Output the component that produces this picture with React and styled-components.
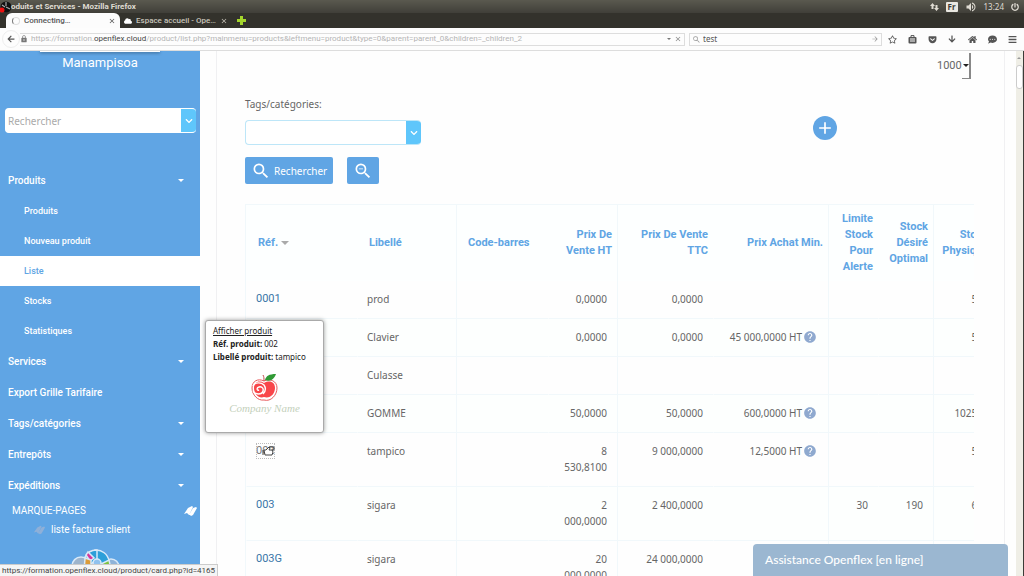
import React from 'react';
import styled, { createGlobalStyle } from 'styled-components';
import {
  MdSearch,
  MdZoomOut,
  MdAdd,
  MdHelp,
  MdLock,
  MdClose,
  MdArrowForward,
  MdVolumeUp,
} from 'react-icons/md';
import {
  FaGetPocket,
  FaCommentDots,
  FaCloud,
  FaArrowLeft,
  FaArrowDown,
  FaHome,
  FaRegStar,
  FaChevronDown,
  FaBars,
  FaPowerOff,
} from 'react-icons/fa';

const productLinks = ['Produits', 'Nouveau produit', 'Liste', 'Stocks', 'Statistiques'];

const sections = [
  { name: 'Services', caret: true },
  { name: 'Export Grille Tarifaire', caret: false },
  { name: 'Tags/catégories', caret: true },
  { name: 'Entrepôts', caret: true },
  { name: 'Expéditions', caret: true },
];

const columns = [
  { title: 'Réf.', width: 111, align: 'left', sorted: true },
  { title: 'Libellé', width: 99, align: 'left' },
  { title: 'Code-barres', width: 92, align: 'left', line: true },
  { title: 'Prix De Vente HT', width: 69, align: 'right' },
  { title: 'Prix De Vente TTC', width: 96, align: 'right', line: true },
  { title: 'Prix Achat Min.', width: 115, align: 'right' },
  { title: 'Limite Stock Pour Alerte', width: 50, align: 'right', line: true },
  { title: 'Stock Désiré Optimal', width: 55, align: 'right' },
  { title: 'Stock Physique', width: 60, align: 'right', line: true },
];

const products = [
  { id: '0001', label: 'prod', ht: '0,0000', ttc: '0,0000', physical: '50' },
  { id: '0002', label: 'Clavier', ht: '0,0000', ttc: '0,0000', buy: '45 000,0000 HT', physical: '50' },
  { id: '0003', label: 'Culasse' },
  { id: '001', label: 'GOMME', ht: '50,0000', ttc: '50,0000', buy: '600,0000 HT', physical: '10250' },
  { id: '002', label: 'tampico', ht: '8 530,8100', ttc: '9 000,0000', buy: '12,5000 HT', physical: '50', hovered: true },
  { id: '003', label: 'sigara', ht: '2 000,0000', ttc: '2 400,0000', limit: '30', wanted: '190', physical: '60' },
  { id: '003G', label: 'sigara', ht: '20 000,0000', ttc: '24 000,0000' },
];

const SignalArrows = () => (
  <svg width="9" height="8" viewBox="0 0 9 8" fill="currentColor">
    <path d="M2.5 0 5 3H3.5v3h-2V3H0zM6.5 8 4 5h1.5V2h2v3H9z" />
  </svg>
);

const Caret = ({ size = 6, color = 'currentColor' }) => (
  <svg width={size} height={size / 2} viewBox="0 0 6 3" fill={color}>
    <path d="M0 0h6L3 3z" />
  </svg>
);

const Bookmark = ({ color = '#fff', size = 14 }) => (
  <svg width={size} height={size} viewBox="0 0 14 14" fill={color}>
    <path d="M1 10 5 4l4-2 1 1-4 8-2-2zM6 11l4-7 3-1 1 1-4 7-2 1-1-1z" />
  </svg>
);

const RecordDot = () => (
  <svg width="11" height="12" viewBox="0 0 11 12">
    <circle cx="6" cy="6" r="5.5" fill="#111" />
    <path d="M6 5V1M6 6l4 2M5 6 2 4" stroke="#aaa" strokeWidth="1.2" />
    <circle cx="2" cy="9" r="2.5" fill="#e11" />
  </svg>
);

const Clipboard = () => (
  <svg width="9" height="9" viewBox="0 0 9 9">
    <path d="M3 2V.6h3V2" fill="none" stroke="currentColor" />
    <rect x=".5" y="2" width="8" height="6.5" rx="1" fill="currentColor" />
    <path d="M2 4h5M2 6h5" stroke="#fdfdfd" />
  </svg>
);

const Apple = () => (
  <svg width="27" height="29" viewBox="0 0 27 29" fill="none">
    <path
      d="M13 8C7 5 1 8 1 15c0 7 6 13 12 12 7 2 13-5 13-12 0-7-7-10-13-7z"
      stroke="#e85a5c"
    />
    <path d="M13 10C8 7 3 9 3 15c0 6 5 11 10 9 6 2 11-3 11-9s-5-8-11-5z" fill="#f9464a" />
    <path
      d="M2 18c2 4 9 4 10 0 1-3-2-5-4-4-3 1-2 4 0 3M2 13c2-4 8-4 11-1 2 3 2 6-1 9"
      stroke="#fff"
      strokeWidth="1.4"
    />
    <path d="M13 8c0-3 0-4-1-6" stroke="#c2474a" />
    <path d="M14 7c1-4 4-6 11-6-2 5-5 8-11 6z" fill="#309a35" />
  </svg>
);

const CloudLogo = () => (
  <svg width="50" height="32" viewBox="0 0 50 32" stroke="#d8e9f8" strokeWidth="1.5">
    <circle cx="10" cy="17" r="9" fill="#9db4cc" />
    <circle cx="40" cy="18" r="8" fill="#8fb3d8" />
    <path d="M24 14V1a13 13 0 0 1 14 11l-8 4z" fill="#2d9fd9" />
    <path d="M14 8A13 13 0 0 1 26 1v9l-6 5z" fill="#2d9fd9" />
    <path d="M17 3 23 9l-4 3-4-6z" fill="#d5379b" />
    <path d="M14 9l6 2v12h-7z" fill="#dc9b39" />
    <path d="M30 15l8-4 2 9-9 3z" fill="#7fc241" />
    <circle cx="26" cy="14" r="4" fill="#8fc1ee" />
  </svg>
);

const Hand = () => (
  <svg width="13" height="11" viewBox="0 0 13 11" fill="#fff" stroke="#444">
    <path d="M2 5h2l3-3 1 1-1 2h3l1 2-1 3H3z" />
    <path d="M1 5v5M7 2h5v3h-2" fill="none" />
  </svg>
);

const App = () => {
  return (
    <Screen>
      <GlobalStyle />
      <TitleBar>
        <RecordDot />
        <WindowTitle>oduits et Services - Mozilla Firefox</WindowTitle>
        <Tray>
          <SignalArrows />
          <Lang>Fr</Lang>
          <MdVolumeUp size={12} />
          <span>13:24</span>
          <FaPowerOff size={8} />
        </Tray>
      </TitleBar>
      <TabBar>
        <Tab $active>
          <Spinner />
          <TabName>Connecting…</TabName>
          <TabClose aria-label="Fermer l'onglet">
            <MdClose size={8} />
          </TabClose>
        </Tab>
        <Tab>
          <FaCloud size={8} color="#fff" />
          <TabName>Espace accueil - Ope…</TabName>
          <TabClose aria-label="Fermer l'onglet">
            <MdClose size={8} />
          </TabClose>
        </Tab>
        <NewTab aria-label="Nouvel onglet">
          <svg width="9" height="9" viewBox="0 0 9 9" fill="#a4d62c">
            <path d="M3 0h3v3h3v3H6v3H3V6H0V3h3z" />
          </svg>
        </NewTab>
      </TabBar>
      <NavBar>
        <Back aria-label="Précédent">
          <FaArrowLeft size={8} />
        </Back>
        <Address>
          <MdLock size={8} color="#777" />
          <Url>
            https://formation.<b>openflex.cloud</b>
            /product/list.php?mainmenu=products&amp;leftmenu=product&amp;type=0&amp;parent=parent_0&amp;children=_children_2
          </Url>
          <Caret size={4} color="#777" />
          <MdClose size={8} color="#888" />
        </Address>
        <WebSearch>
          <MdSearch size={9} color="#999" />
          <WebInput aria-label="Recherche web" defaultValue="test" />
          <MdArrowForward size={8} color="#999" />
        </WebSearch>
        <Tools>
          <FaRegStar size={9} />
          <Clipboard />
          <FaGetPocket size={9} />
          <FaArrowDown size={8} />
          <FaHome size={9} />
          <FaCommentDots size={9} />
          <FaBars size={9} />
        </Tools>
      </NavBar>
      <Page>
        <Sidebar>
          <LogoEdge />
          <Company>Manampisoa</Company>
          <Combo $side>
            <ComboInput aria-label="Rechercher" placeholder="Rechercher" />
            <ComboButton aria-label="Ouvrir">
              <FaChevronDown size={8} />
            </ComboButton>
          </Combo>
          <Menu>
            <MenuLink href="#produits">
              Produits
              <Caret />
            </MenuLink>
            {productLinks.map(name => (
              <SubLink key={name} href="#liste" $active={name === 'Liste'}>
                {name}
              </SubLink>
            ))}
            {sections.map(({ name, caret }) => (
              <MenuLink key={name} href="#section">
                {name}
                {caret && <Caret />}
              </MenuLink>
            ))}
          </Menu>
          <Bookmarks>
            <BookmarkHead>
              MARQUE-PAGES
              <Bookmark />
            </BookmarkHead>
            <BookmarkLink href="#facture">
              <Bookmark color="#8fb0d8" size={12} />
              liste facture client
            </BookmarkLink>
          </Bookmarks>
          <CloudWrap>
            <CloudLogo />
          </CloudWrap>
        </Sidebar>
        <Panel>
          <Pager>
            <PageSize aria-label="Lignes par page" defaultValue="1000">
              <option>1000</option>
            </PageSize>
            <PagerCaret>
              <Caret color="#222" />
            </PagerCaret>
          </Pager>
          <Filters>
            <FilterFields>
              <FilterLabel htmlFor="tags">Tags/catégories:</FilterLabel>
              <Combo>
                <ComboInput id="tags" />
                <ComboButton aria-label="Choisir une catégorie">
                  <FaChevronDown size={8} />
                </ComboButton>
              </Combo>
              <Actions>
                <Button>
                  <MdSearch size={20} />
                  Rechercher
                </Button>
                <Button aria-label="Effacer la recherche">
                  <MdZoomOut size={20} />
                </Button>
              </Actions>
            </FilterFields>
            <AddButton aria-label="Ajouter">
              <MdAdd size={20} />
            </AddButton>
          </Filters>
          <TableWrap>
            <Table>
              <colgroup>
                {columns.map(({ title, width }) => (
                  <Col key={title} $width={width} />
                ))}
              </colgroup>
              <thead>
                <tr>
                  {columns.map(({ title, align, line, sorted }) => (
                    <HeadCell key={title} $align={align} $line={line}>
                      {title} {sorted && <Caret size={8} color="#aaa" />}
                    </HeadCell>
                  ))}
                </tr>
              </thead>
              <tbody>
                {products.map(row => (
                  <Row key={row.id}>
                    <Cell>
                      <RefLink href="#card" $hovered={row.hovered}>
                        {row.id}
                        {row.hovered && (
                          <Pointer>
                            <Hand />
                          </Pointer>
                        )}
                      </RefLink>
                    </Cell>
                    <Cell>{row.label}</Cell>
                    <Cell $line />
                    <Cell $align="right">{row.ht}</Cell>
                    <Cell $align="right" $line>
                      {row.ttc}
                    </Cell>
                    <Cell $align="right">
                      {row.buy && (
                        <Buy>
                          {row.buy}
                          <MdHelp size={14} color="#8fa9cf" />
                        </Buy>
                      )}
                    </Cell>
                    <Cell $align="right" $line>
                      {row.limit}
                    </Cell>
                    <Cell $align="right">{row.wanted}</Cell>
                    <Cell $align="right" $line>
                      {row.physical}
                    </Cell>
                  </Row>
                ))}
              </tbody>
            </Table>
          </TableWrap>
        </Panel>
        <Scrollbar>
          <ScrollButton aria-label="Haut">
            <Caret size={4} color="#999" />
          </ScrollButton>
          <ScrollThumb />
        </Scrollbar>
        <Tooltip>
          <TipLink href="#card">Afficher produit</TipLink>
          <div>
            <b>Réf. produit:</b> 002
          </div>
          <div>
            <b>Libellé produit:</b> tampico
          </div>
          <TipImage>
            <Apple />
            <Brand>Company Name</Brand>
          </TipImage>
        </Tooltip>
        <Chat>Assistance Openflex [en ligne]</Chat>
        <Status>https://formation.openflex.cloud/product/card.php?id=4165</Status>
      </Page>
    </Screen>
  );
};

const GlobalStyle = createGlobalStyle`
  * {
    box-sizing: border-box;
  }

  body {
    margin: 0;
    font-family: 'Noto Sans', sans-serif;
    font-size: 10px;
    line-height: 16px;
    color: #666;
  }

  button, input, select {
    padding: 0;
    border: 0;
    background: none;
    color: inherit;
    font: inherit;
  }

  a {
    color: inherit;
    text-decoration: none;
  }

  svg {
    flex-shrink: 0;
  }
`;

const Screen = styled.div`
  display: flex;
  flex-direction: column;
  height: 100vh;
  overflow: hidden;
  background: #fff;
`;

const TitleBar = styled.div`
  display: flex;
  align-items: center;
  height: 13px;
  background: linear-gradient(#5a594f, #403f39);
  color: #dfdbd2;
  font-size: 8px;
`;

const WindowTitle = styled.span`
  flex: 1;
  font-family: Roboto, sans-serif;
  font-weight: bold;
`;

const Tray = styled.div`
  display: flex;
  align-items: center;
  gap: 7px;
  padding-right: 5px;
`;

const Lang = styled.span`
  padding: 0 2px;
  border-radius: 1px;
  background: #e8e6e0;
  color: #3c3b37;
  font-weight: bold;
  line-height: 10px;
`;

const TabBar = styled.div`
  display: flex;
  align-items: stretch;
  height: 15px;
  padding-left: 6px;
  background: #33322c;
`;

const Tab = styled.div`
  display: flex;
  align-items: center;
  gap: 4px;
  width: ${props => (props.$active ? '114px' : '108px')};
  padding: 0 4px 0 ${props => (props.$active ? '6px' : '4px')};
  border-radius: 6px 6px 0 0;
  background: ${props => (props.$active ? '#fcfcfc' : 'transparent')};
  color: ${props => (props.$active ? '#555' : '#c8c4ba')};
`;

const Spinner = styled.span`
  width: 8px;
  height: 8px;
  border: 1px solid #ddd;
  border-left-color: #777;
  border-radius: 50%;
`;

const TabName = styled.span`
  flex: 1;
  font-family: Roboto, sans-serif;
  font-size: 8px;
  font-weight: 500;
  white-space: nowrap;
`;

const TabClose = styled.button`
  display: flex;
`;

const NewTab = styled.button`
  display: flex;
  align-items: center;
  padding: 0 9px;
`;

const NavBar = styled.div`
  display: flex;
  align-items: center;
  gap: 4px;
  height: 23px;
  padding-right: 7px;
  border-bottom: 1px solid #ddd;
  background: #fdfdfd;
  color: #555;
  font-family: Roboto, sans-serif;
  font-size: 8px;
`;

const Back = styled.button`
  display: flex;
  align-items: center;
  justify-content: center;
  width: 18px;
  height: 18px;
  margin-left: 2px;
  border: 1px solid #eee;
  border-radius: 50%;
`;

const Address = styled.div`
  display: flex;
  flex: 1;
  align-items: center;
  gap: 3px;
  min-width: 0;
  height: 13px;
  margin-left: -4px;
  padding-right: 2px;
  border: 1px solid #ddd;
  border-left: 0;
`;

const Url = styled.span`
  flex: 1;
  overflow: hidden;
  color: #b5b5b5;
  white-space: nowrap;

  b {
    color: #444;
    font-weight: normal;
  }
`;

const WebSearch = styled.div`
  display: flex;
  align-items: center;
  gap: 2px;
  width: 193px;
  height: 13px;
  padding: 0 2px;
  border: 1px solid #ddd;
`;

const WebInput = styled.input`
  flex: 1;
  min-width: 0;
  height: 10px;
  font-family: 'Noto Sans', sans-serif;
`;

const Tools = styled.div`
  display: flex;
  align-items: center;
  justify-content: space-between;
  width: 131px;
  padding-left: 2px;
`;

const Page = styled.div`
  position: relative;
  display: flex;
  flex: 1;
  min-height: 0;
  background: #fefefe;
`;

const Sidebar = styled.aside`
  display: flex;
  flex-direction: column;
  width: 200px;
  overflow: hidden;
  background: #60a5e4;
  color: #fff;
  font-family: Roboto, sans-serif;
`;

const LogoEdge = styled.div`
  flex-shrink: 0;
  width: 120px;
  height: 1px;
  margin: 0 auto 0 40px;
  background: #fff;
  box-shadow: 0 1px 3px rgba(0, 0, 0, 0.6);
`;

const Company = styled.div`
  margin: 3px 0 37px;
  font-size: 13px;
  text-align: center;
`;

const Combo = styled.div`
  display: flex;
  flex-shrink: 0;
  height: 25px;
  margin: ${props => (props.$side ? '0 4px 0 5px' : '0')};
  overflow: hidden;
  border: 1px solid ${props => (props.$side ? '#fff' : '#bde6f8')};
  border-right: 0;
  border-radius: 4px;
  background: #fff;
`;

const ComboInput = styled.input`
  flex: 1;
  min-width: 0;
  padding: 0 2px;
  font-family: 'Noto Sans', sans-serif;

  &::placeholder {
    color: #aaa;
    opacity: 1;
  }
`;

const ComboButton = styled.button`
  display: flex;
  align-items: center;
  justify-content: center;
  width: 15px;
  margin: -1px 0;
  background: #5fc6fb;
  color: #fff;
`;

const Menu = styled.nav`
  display: flex;
  flex-direction: column;
  flex-shrink: 0;
  margin-top: 32px;
`;

const MenuLink = styled.a`
  display: flex;
  align-items: center;
  justify-content: space-between;
  height: 31px;
  padding: 0 16px 0 8px;
  font-size: 10px;
  font-weight: 500;
`;

const SubLink = styled.a`
  height: 30px;
  padding-left: 24px;
  background: ${props => (props.$active ? '#fff' : 'transparent')};
  color: ${props => (props.$active ? '#60a5e4' : '#fff')};
  font-size: 9px;
  font-weight: 500;
  line-height: 30px;
`;

const Bookmarks = styled.div`
  flex-shrink: 0;
  padding: 0 3px 0 12px;
  line-height: 19px;
`;

const BookmarkHead = styled.div`
  display: flex;
  align-items: center;
  justify-content: space-between;
`;

const BookmarkLink = styled.a`
  display: flex;
  align-items: center;
  gap: 6px;
  padding-left: 21px;
`;

const CloudWrap = styled.div`
  margin: 10px 0 0 71px;
`;

const Panel = styled.main`
  flex: 1;
  min-width: 0;
  margin: 0 11px 0 16px;
  padding: 0 30px 0 28px;
  overflow: hidden;
  border: solid #f0f0f2;
  border-width: 0 1px;
`;

const Pager = styled.div`
  display: flex;
  align-items: center;
  justify-content: flex-end;
  height: 26px;
  margin: 2px 3px 0 0;
`;

const PageSize = styled.select`
  appearance: none;
  font-family: Roboto, sans-serif;
  font-size: 11px;
`;

const PagerCaret = styled.span`
  display: flex;
  align-items: center;
  justify-content: flex-end;
  width: 9px;
  height: 26px;
  border-right: 2px solid #888;
  border-bottom: 1px solid #888;
`;

const Filters = styled.div`
  display: grid;
  grid-template-columns: 1fr 161px;
  padding: 17px 0 20px;
`;

const FilterFields = styled.div`
  display: flex;
  flex-direction: column;
  width: 176px;
`;

const FilterLabel = styled.label`
  margin-bottom: 8px;
`;

const Actions = styled.div`
  display: flex;
  gap: 14px;
  margin-top: 12px;
`;

const Button = styled.button`
  display: flex;
  align-items: center;
  gap: 3px;
  height: 27px;
  padding: 0 6px;
  border-radius: 2px;
  background: #60a5e4;
  color: #fff;
`;

const AddButton = styled.button`
  display: flex;
  align-items: center;
  justify-content: center;
  width: 24px;
  height: 24px;
  margin-top: 20px;
  border-radius: 50%;
  background: #60a5e4;
  color: #fff;
`;

const TableWrap = styled.div`
  overflow: hidden;
  border: solid #f1f8fb;
  border-width: 1px 0 0 1px;
`;

const Table = styled.table`
  width: 747px;
  table-layout: fixed;
  border-collapse: separate;
  border-spacing: 0;
`;

const Col = styled.col`
  width: ${props => props.$width}px;
`;

const HeadCell = styled.th`
  height: 76px;
  padding: 0 5px 0 11px;
  border-left: 1px solid ${props => (props.$line ? '#f1f8fb' : 'transparent')};
  background: #fdffff;
  color: #60a5e4;
  font-family: Roboto, sans-serif;
  font-size: 11px;
  font-weight: bold;
  text-align: ${props => props.$align};

  &:nth-child(n + 7) {
    padding-left: 0;
  }

  svg {
    vertical-align: middle;
  }
`;

const Row = styled.tr`
  &:nth-child(even) {
    background: #fdfffe;
  }
`;

const Cell = styled.td`
  padding: 10px 10px 11px 9px;
  border-bottom: 1px solid #f1f8fb;
  border-left: 1px solid ${props => (props.$line ? '#f1f8fb' : 'transparent')};
  text-align: ${props => props.$align || 'left'};
  vertical-align: top;
`;

const RefLink = styled.a`
  position: relative;
  display: block;
  width: fit-content;
  color: ${props => (props.$hovered ? '#777' : '#3a76a8')};
  font-family: Roboto, sans-serif;
  font-size: 11px;
  outline: ${props => (props.$hovered ? '1px dotted #bbb' : '0')};
  outline-offset: -1px;
`;

const Pointer = styled.span`
  position: absolute;
  top: 2px;
  left: 6px;
  display: flex;
`;

const Buy = styled.span`
  display: flex;
  align-items: center;
  justify-content: flex-end;
  gap: 1px;
  margin-right: 1px;
  white-space: nowrap;
`;

const Scrollbar = styled.div`
  width: 8px;
  border-right: 1px solid #3c3b37;
  background: #efeee6;
`;

const ScrollButton = styled.button`
  display: flex;
  align-items: center;
  justify-content: center;
  width: 100%;
  height: 14px;
  transform: rotate(180deg);
`;

const ScrollThumb = styled.div`
  height: 24px;
  border: 1px solid #ccc;
  border-radius: 3px;
  background: #fff;
`;

const Tooltip = styled.div`
  position: absolute;
  top: 269px;
  left: 205px;
  width: 119px;
  height: 113px;
  padding: 3px 7px;
  border: 1px solid #aaa;
  border-radius: 3px;
  background: #fff;
  box-shadow: 0 0 4px rgba(0, 0, 0, 0.4);
  color: #222;
  font-size: 8px;
  line-height: 13px;
  white-space: nowrap;
`;

const TipLink = styled.a`
  text-decoration: underline;
`;

const TipImage = styled.div`
  display: flex;
  flex-direction: column;
  align-items: center;
  margin-top: 10px;
`;

const Brand = styled.span`
  color: #c3d0bb;
  font-family: 'Liberation Serif', serif;
  font-size: 11px;
  font-style: italic;
`;

const Chat = styled.button`
  position: absolute;
  right: 16px;
  bottom: 0;
  width: 255px;
  height: 32px;
  padding: 0 12px;
  border-radius: 4px 4px 0 0;
  background: #9bb7d1;
  color: #fff;
  font-family: Lato, sans-serif;
  font-size: 12px;
  font-weight: 500;
  text-align: left;
`;

const Status = styled.div`
  position: absolute;
  bottom: 0;
  left: 0;
  padding: 0 2px;
  border: solid #ccc;
  border-width: 1px 1px 0 0;
  background: #f5f5f5;
  color: #444;
  font-family: Roboto, sans-serif;
  font-size: 8px;
  line-height: 11px;
`;

export default App;
